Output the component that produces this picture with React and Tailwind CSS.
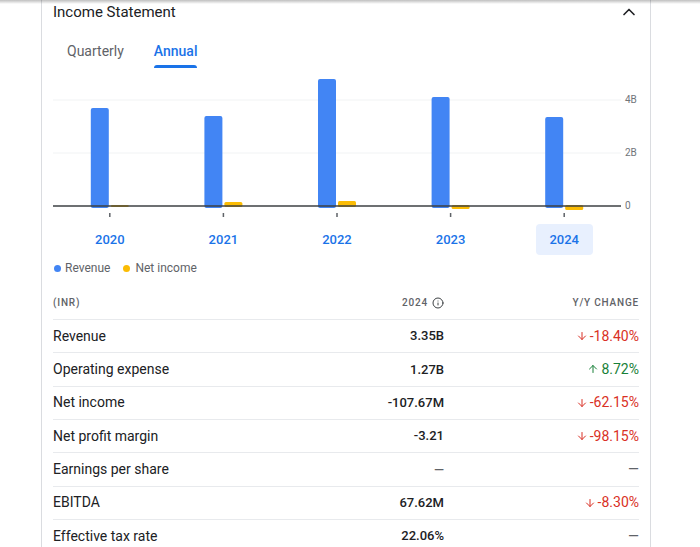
import React, { useState } from 'react';
import { ChevronUp, Info, ArrowDown, ArrowUp } from 'lucide-react';

const YEARS = [
  { year: '2020', rev: 98, net: 1 },
  { year: '2021', rev: 90, net: 4 },
  { year: '2022', rev: 127, net: 5 },
  { year: '2023', rev: 109, net: -3 },
  { year: '2024', rev: 89, net: -4 },
];

const ROWS = [
  { label: 'Revenue', value: '3.35B', change: '-18.40%', dir: 'down' },
  { label: 'Operating expense', value: '1.27B', change: '8.72%', dir: 'up' },
  { label: 'Net income', value: '-107.67M', change: '-62.15%', dir: 'down' },
  { label: 'Net profit margin', value: '-3.21', change: '-98.15%', dir: 'down' },
  { label: 'Earnings per share', value: '—', change: '—', dir: null },
  { label: 'EBITDA', value: '67.62M', change: '-8.30%', dir: 'down' },
  { label: 'Effective tax rate', value: '22.06%', change: '—', dir: null },
];

const GROUP = 113.6;
const AXIS = 131;

const Chart = () => (
  <svg width="586" height="145" className="block">
    <line x1="0" y1="25" x2="568" y2="25" stroke="#f1f3f4" strokeWidth="1" />
    <line x1="0" y1="78" x2="568" y2="78" stroke="#f1f3f4" strokeWidth="1" />
    {YEARS.map((d, i) => {
      const c = GROUP / 2 + i * GROUP;
      return (
        <g key={d.year}>
          <rect x={c - 19} y={AXIS - d.rev} width="18" height={d.rev + 2} rx="2" fill="#4285f4" />
          {d.net > 0 ? (
            <rect x={c + 1} y={AXIS - d.net} width="18" height={d.net + 1} rx="1.5" fill="#fbbc04" />
          ) : (
            <rect x={c + 1} y={AXIS - 1} width="18" height={-d.net + 1} rx="1.5" fill="#fbbc04" />
          )}
          <rect x={c - 0.75} y="138" width="1.5" height="4" fill="#5f6368" />
        </g>
      );
    })}
    <line x1="0" y1={AXIS} x2="568" y2={AXIS} stroke="#3c4043" strokeWidth="1.5" />
    <text x="572" y="25" dominantBaseline="middle" fontSize="10" fill="#70757a" fontFamily="Roboto, sans-serif">4B</text>
    <text x="572" y="78" dominantBaseline="middle" fontSize="10" fill="#70757a" fontFamily="Roboto, sans-serif">2B</text>
    <text x="572" y={AXIS} dominantBaseline="middle" fontSize="10" fill="#70757a" fontFamily="Roboto, sans-serif">0</text>
  </svg>
);

export default function App() {
  const [tab, setTab] = useState('Annual');
  const [year, setYear] = useState('2024');

  return (
    <div className="relative h-[547px] w-[700px] overflow-hidden bg-white font-['Roboto',sans-serif] text-[#202124]">
      <div className="pointer-events-none absolute left-0 right-0 top-0 h-[4px] bg-gradient-to-b from-black/25 to-transparent" />
      <div className="ml-[41px] w-[610px] border-x border-[#dadce0] px-[11px]">
        <div className="flex h-[24px] items-center justify-between">
          <h2 className="text-[15px] leading-[18px] font-normal">Income Statement</h2>
          <ChevronUp size={20} strokeWidth={2} className="text-[#202124]" />
        </div>

        <div className="mt-[19px] flex gap-[2px]">
          {['Quarterly', 'Annual'].map((t) => (
            <button
              key={t}
              onClick={() => setTab(t)}
              className={`flex flex-col items-center px-[14px] text-[14px] leading-[17px] ${
                tab === t ? 'font-medium text-[#1a73e8]' : 'font-normal text-[#5f6368]'
              }`}
            >
              {t}
              <span className={`mt-[5px] h-[3px] w-full rounded-t-[3px] ${tab === t ? 'bg-[#1a73e8]' : 'bg-transparent'}`} />
            </button>
          ))}
        </div>

        <div className="mt-[7px]">
          <Chart />
        </div>

        <div className="mt-[4px] grid w-[568px] grid-cols-5">
          {YEARS.map((d) => (
            <div key={d.year} className="flex justify-center">
              <button
                onClick={() => setYear(d.year)}
                className={`h-[31px] w-[57px] rounded-[4px] text-[13px] font-medium text-[#1a73e8] ${
                  year === d.year ? 'bg-[#e8f0fe]' : ''
                }`}
              >
                {d.year}
              </button>
            </div>
          ))}
        </div>

        <div className="mt-[7px] flex h-[12px] items-center text-[12px] leading-[12px] text-[#5f6368]">
          <span className="ml-[1px] mr-[4px] h-[7px] w-[7px] rounded-full bg-[#4285f4]" />
          <span>Revenue</span>
          <span className="ml-[13px] mr-[5px] h-[7px] w-[7px] rounded-full bg-[#fbbc04]" />
          <span>Net income</span>
        </div>

        <div className="mt-[12px] flex h-[33px] items-center text-[10px] font-medium tracking-[0.8px] text-[#5f6368]">
          <div className="flex-1">(INR)</div>
          <div className="flex w-[150px] items-center justify-end gap-[4px]">
            <span>2024</span>
            <Info size={12} strokeWidth={2} className="text-[#3c4043]" />
          </div>
          <div className="w-[195px] text-right">Y/Y CHANGE</div>
        </div>

        {ROWS.map((r) => (
          <div key={r.label} className="flex h-[33.33px] items-center border-t border-[#e8eaed] text-[14px]">
            <div className="flex-1">{r.label}</div>
            <div className={`w-[150px] text-right text-[13px] font-medium ${r.value === '—' ? 'text-[#5f6368]' : ''}`}>{r.value}</div>
            <div
              className={`flex w-[195px] items-center justify-end gap-[2px] ${
                r.dir === 'down' ? 'text-[#d93025]' : r.dir === 'up' ? 'text-[#188038]' : 'text-[#5f6368]'
              }`}
            >
              {r.dir === 'down' && <ArrowDown size={12} strokeWidth={2} />}
              {r.dir === 'up' && <ArrowUp size={12} strokeWidth={2} />}
              <span>{r.change}</span>
            </div>
          </div>
        ))}
      </div>
    </div>
  );
}
